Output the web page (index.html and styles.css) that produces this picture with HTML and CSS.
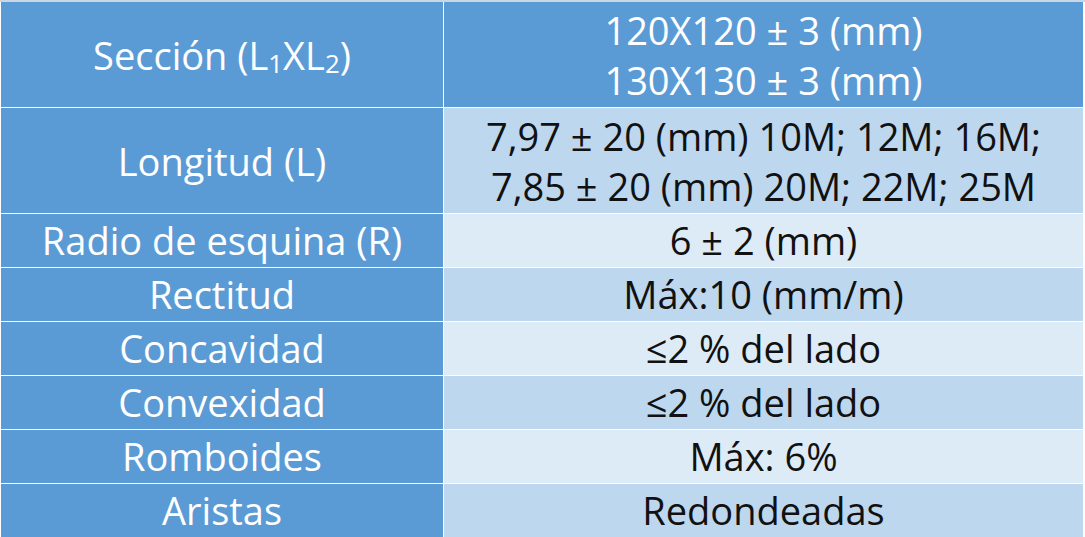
FILE: index.html
```html
<!DOCTYPE html>
<html lang="es">
<head>
<meta charset="utf-8">
<link rel="stylesheet" href="styles.css">
</head>
<body>
<table class="spec">
  <tr class="row-tall">
    <th class="label">Sección (L<span class="sub">1</span>XL<span class="sub">2</span>)</th>
    <td class="val val-head">120X120 ± 3 (mm)<br>130X130 ± 3 (mm)</td>
  </tr>
  <tr class="row-tall">
    <th class="label">Longitud (L)</th>
    <td class="val dark">7,97 ± 20 (mm) 10M; 12M; 16M;<br>7,85 ± 20 (mm) 20M; 22M; 25M</td>
  </tr>
  <tr class="row">
    <th class="label">Radio de esquina (R)</th>
    <td class="val light">6 ± 2 (mm)</td>
  </tr>
  <tr class="row">
    <th class="label">Rectitud</th>
    <td class="val dark">Máx:10 (mm/m)</td>
  </tr>
  <tr class="row">
    <th class="label">Concavidad</th>
    <td class="val light">≤2 % del lado</td>
  </tr>
  <tr class="row">
    <th class="label">Convexidad</th>
    <td class="val dark">≤2 % del lado</td>
  </tr>
  <tr class="row">
    <th class="label">Romboides</th>
    <td class="val light">Máx: 6%</td>
  </tr>
  <tr class="row">
    <th class="label">Aristas</th>
    <td class="val dark">Redondeadas</td>
  </tr>
</table>
</body>
</html>
```
FILE: styles.css
```css
html, body {
  margin: 0;
  padding: 0;
  background: #ffffff;
}
body {
  font-family: "Open Sans", "Noto Sans", sans-serif;
  font-size: 38px;
  border-top: 2px solid #c9d6e3;
}
.spec {
  width: 1083px;
  margin-left: 1px;
  border-collapse: collapse;
  table-layout: fixed;
}
.spec th, .spec td {
  border: 1px solid #ffffff;
  padding: 0;
  text-align: center;
  vertical-align: middle;
  font-weight: 400;
}
.spec tr:first-child th, .spec tr:first-child td { border-top: none; }
.spec th:first-child { border-left: none; }
.label {
  width: 442px;
  background: #5b9bd5;
  color: #ffffff;
}
.val { color: #111111; line-height: 50px; }
.val-head { background: #5b9bd5; color: #ffffff; }
.dark { background: #bdd7ee; }
.light { background: #ddebf7; }
.row-tall th, .row-tall td { height: 105px; }
.row th, .row td { height: 53px; line-height: 53px; }
.sub {
  font-size: 0.68em;
  vertical-align: -0.1em;
  line-height: 0;
}
```
